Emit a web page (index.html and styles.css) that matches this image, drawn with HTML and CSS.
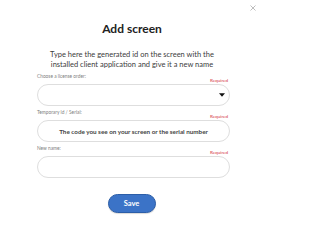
FILE: index.html
```html
<!DOCTYPE html>
<html>
<head>
<meta charset="utf-8">
<link rel="stylesheet" href="styles.css">
</head>
<body>
<div class="modal">
  <button class="close" aria-label="Close">
    <svg width="6" height="6" viewBox="0 0 6 6"><path d="M0.5 0.5L5.5 5.5M5.5 0.5L0.5 5.5" stroke="#b5b5b5" stroke-width="0.9" fill="none"/></svg>
  </button>
  <h1 class="title">Add screen</h1>
  <p class="subtitle">Type here the generated id on the screen with the installed client application and give it a new name</p>
  <form class="form">
    <div class="field">
      <div class="label-row"><span class="label">Choose a license order:</span><span class="req">Required</span></div>
      <div class="input select">
        <svg class="caret" width="6" height="4" viewBox="0 0 6 4"><path d="M0 0.3H6L3 3.7Z" fill="#111"/></svg>
      </div>
    </div>
    <div class="field">
      <div class="label-row"><span class="label">Temporary id / Serial:</span><span class="req">Required</span></div>
      <div class="input"><span class="placeholder">The code you see on your screen or the serial number</span></div>
    </div>
    <div class="field">
      <div class="label-row"><span class="label">New name:</span><span class="req">Required</span></div>
      <div class="input"></div>
    </div>
    <div class="actions"><button type="button" class="save">Save</button></div>
  </form>
</div>
</body>
</html>
```

FILE: styles.css
```css
html, body {
  margin: 0;
  padding: 0;
  background: #fff;
}
body {
  font-family: Lato, "Open Sans", sans-serif;
  width: 264px;
  height: 240px;
  overflow: hidden;
}
.modal {
  position: relative;
  width: 264px;
  height: 240px;
  padding-top: 20px;
  box-sizing: border-box;
}
.close {
  position: absolute;
  top: 5px;
  right: 8px;
  width: 6px;
  height: 6px;
  padding: 0;
  border: 0;
  background: none;
  display: flex;
}
.title {
  margin: 0;
  text-align: center;
  font-size: 12px;
  line-height: 18px;
  font-weight: 700;
  color: #222;
}
.subtitle {
  margin: 12px auto 0;
  width: 180px;
  text-align: center;
  font-size: 7.5px;
  line-height: 9.5px;
  color: #3c3c3c;
}
.form {
  margin: 2px 34px 0 37px;
  display: flex;
  flex-direction: column;
}
.field {
  display: flex;
  flex-direction: column;
  margin-bottom: 1px;
}
.label-row {
  height: 13px;
  display: flex;
  justify-content: space-between;
  padding-right: 2px;
}
.label {
  font-size: 4.8px;
  line-height: 6px;
  margin-top: 2px;
  color: #808080;
}
.req {
  font-size: 4.6px;
  line-height: 6px;
  margin-top: 6px;
  color: #d4303a;
}
.input {
  height: 22px;
  box-sizing: border-box;
  border: 1px solid #dedede;
  border-radius: 11px;
  display: flex;
  align-items: center;
  justify-content: center;
  background: #fff;
}
.select {
  justify-content: flex-end;
  padding-right: 4px;
}
.caret {
  display: block;
}
.placeholder {
  font-size: 6.3px;
  font-weight: 700;
  color: #444;
  white-space: nowrap;
}
.actions {
  display: flex;
  justify-content: center;
  margin-top: 15px;
  padding-right: 4px;
}
.save {
  width: 48px;
  height: 19px;
  border-radius: 10px;
  border: 1px solid #2c5ea8;
  background: #3b73c7;
  color: #fff;
  font-family: Lato, "Open Sans", sans-serif;
  font-weight: 700;
  font-size: 7.5px;
  padding: 0;
  box-shadow: 0 1px 1px rgba(0,0,0,0.15);
}
```
